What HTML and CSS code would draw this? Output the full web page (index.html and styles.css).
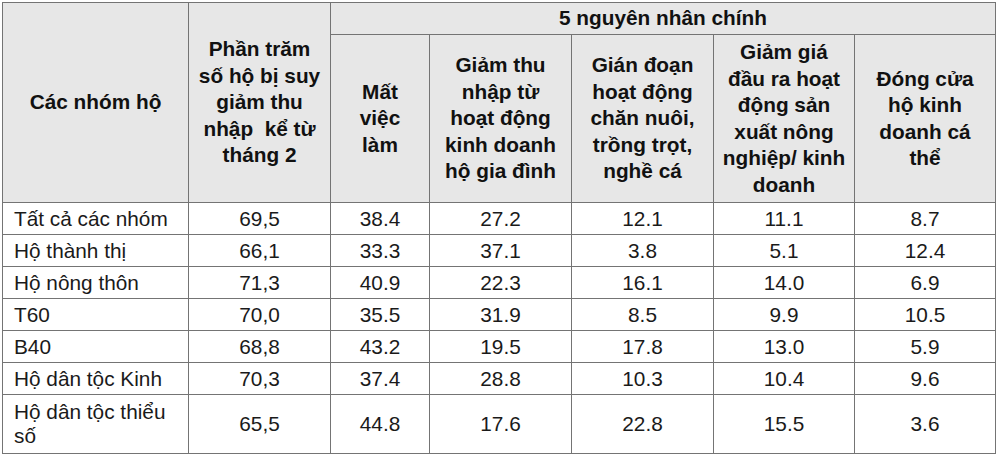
FILE: index.html
```html
<!DOCTYPE html>
<html lang="vi">
<head>
<meta charset="utf-8">
<title>5 nguyên nhân chính</title>
<link rel="stylesheet" href="styles.css">
</head>
<body>
<table class="data">
  <colgroup>
    <col class="c-group">
    <col class="c-pct">
    <col class="c-job">
    <col class="c-wide">
    <col class="c-wide">
    <col class="c-wide2">
    <col class="c-wide2">
  </colgroup>
  <thead>
    <tr class="h-top">
      <th rowspan="2" class="h-group">Các nhóm hộ</th>
      <th rowspan="2">Phần trăm<br>số hộ bị suy<br>giảm thu<br>nhập&nbsp; kể từ<br>tháng 2</th>
      <th colspan="5">5 nguyên nhân chính</th>
    </tr>
    <tr class="h-sub">
      <th>Mất<br>việc<br>làm</th>
      <th>Giảm thu<br>nhập từ<br>hoạt động<br>kinh doanh<br>hộ gia đình</th>
      <th>Gián đoạn<br>hoạt động<br>chăn nuôi,<br>trồng trọt,<br>nghề cá</th>
      <th>Giảm giá<br>đầu ra hoạt<br>động sản<br>xuất nông<br>nghiệp/ kinh<br>doanh</th>
      <th>Đóng cửa<br>hộ kinh<br>doanh cá<br>thể</th>
    </tr>
  </thead>
  <tbody>
    <tr><td class="name">Tất cả các nhóm</td><td>69,5</td><td>38.4</td><td>27.2</td><td>12.1</td><td>11.1</td><td>8.7</td></tr>
    <tr><td class="name">Hộ thành thị</td><td>66,1</td><td>33.3</td><td>37.1</td><td>3.8</td><td>5.1</td><td>12.4</td></tr>
    <tr><td class="name">Hộ nông thôn</td><td>71,3</td><td>40.9</td><td>22.3</td><td>16.1</td><td>14.0</td><td>6.9</td></tr>
    <tr><td class="name">T60</td><td>70,0</td><td>35.5</td><td>31.9</td><td>8.5</td><td>9.9</td><td>10.5</td></tr>
    <tr><td class="name">B40</td><td>68,8</td><td>43.2</td><td>19.5</td><td>17.8</td><td>13.0</td><td>5.9</td></tr>
    <tr><td class="name">Hộ dân tộc Kinh</td><td>70,3</td><td>37.4</td><td>28.8</td><td>10.3</td><td>10.4</td><td>9.6</td></tr>
    <tr class="tall"><td class="name">Hộ dân tộc thiểu<br>số</td><td>65,5</td><td>44.8</td><td>17.6</td><td>22.8</td><td>15.5</td><td>3.6</td></tr>
  </tbody>
</table>
</body>
</html>
```

FILE: styles.css
```css
html, body {
  margin: 0;
  padding: 0;
  background: #ffffff;
}

body {
  font-family: "Liberation Sans", Arial, sans-serif;
  color: #161616;
}

.data {
  margin: 2px 0 0 2px;
  width: 994px;
  table-layout: fixed;
  border-collapse: collapse;
  border: 1px solid #5e5e5e;
}

.c-group { width: 186px; }
.c-pct { width: 142px; }
.c-job { width: 99px; }
.c-wide { width: 142px; }
.c-wide2 { width: 141px; }

.data th,
.data td {
  border: 1px solid #747474;
  padding: 0 2px;
  text-align: center;
  vertical-align: middle;
}

.data th {
  background: #e7e7e7;
  font-weight: bold;
  font-size: 20.8px;
  line-height: 26.5px;
  color: #111111;
}

.h-top { height: 32px; }
.h-sub { height: 168px; }

.data td {
  font-size: 20.8px;
  line-height: 24px;
  height: 31px;
  color: #1a1a1a;
}

.data td.name {
  text-align: left;
  padding-left: 11px;
}

.data tr.tall td {
  height: 58px;
}
```
